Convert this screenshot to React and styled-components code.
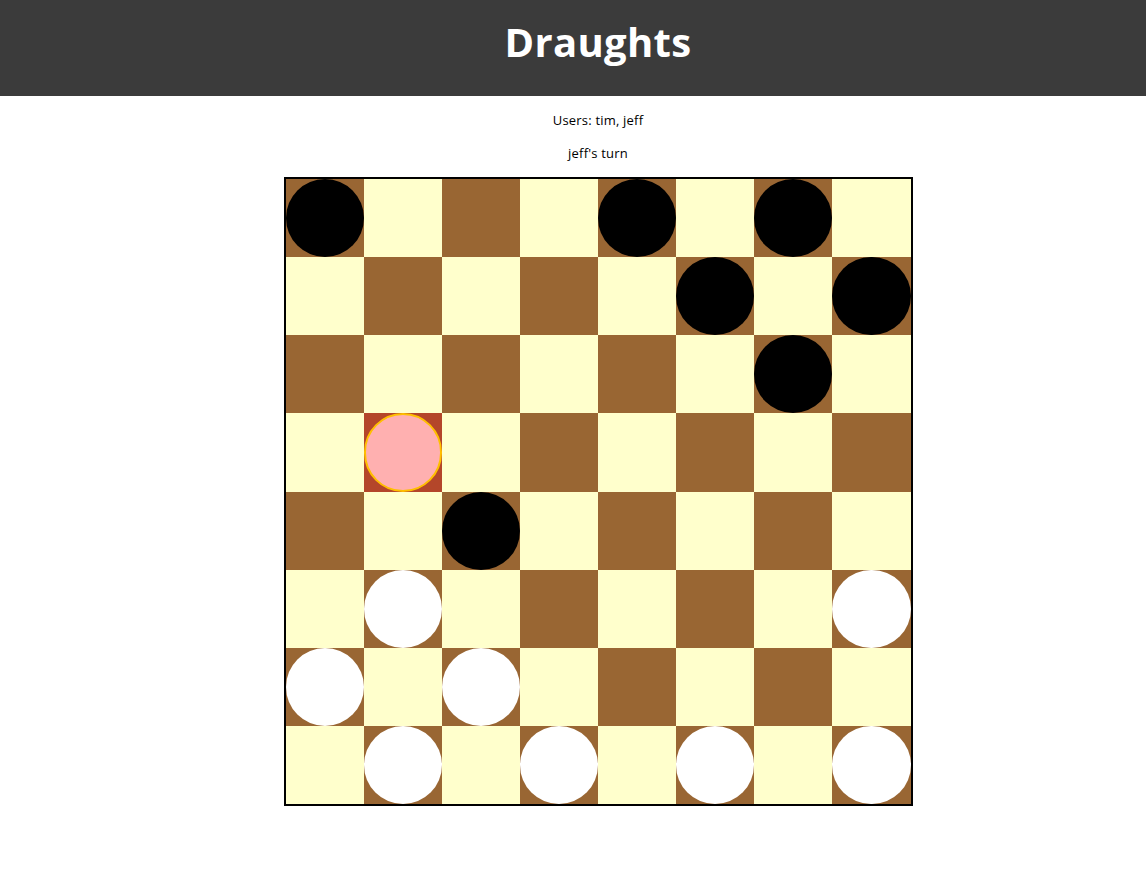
import React from 'react';
import styled, { createGlobalStyle } from 'styled-components';

const GlobalStyle = createGlobalStyle`
    body {
        margin: 0;
        background: white;
        font-family: "Open Sans", "Noto Sans", sans-serif;
    }
`;

const Header = styled.header`
    box-sizing: border-box;
    height: 96px;
    background-color: #3b3b3b;
    display: flex;
    align-items: center;
    justify-content: center;
    padding-left: 50px;
    padding-bottom: 14px;
`;

const Title = styled.h1`
    margin: 0;
    color: white;
    font-size: 40px;
    font-weight: 700;
    letter-spacing: 0.3px;
`;

const Main = styled.main`
    display: flex;
    flex-direction: column;
    align-items: center;
    padding-left: 50px;
    padding-top: 15px;
`;

const Info = styled.p`
    margin: 0 0 15px;
    font-size: 13px;
    line-height: 18px;
    color: black;
    letter-spacing: 0.2px;
`;

const Board = styled.div`
    box-sizing: border-box;
    width: 629px;
    height: 629px;
    display: grid;
    grid-template-columns: repeat(8, 1fr);
    grid-template-rows: repeat(8, 1fr);
    border: 2px solid black;
`;

const Square = styled.div`
    display: flex;
    align-items: center;
    justify-content: center;
    background-color: ${props => props.selected ? '#b4462a' : props.dark ? '#996633' : '#ffffcc'};
`;

const Piece = styled.div`
    box-sizing: border-box;
    width: 100%;
    height: 100%;
    border-radius: 50%;
    background-color: ${props => props.selected ? '#ffb0b0' : props.colour === 'b' ? 'black' : 'white'};
    border: ${props => props.selected ? '2px solid #ffbf00' : 'none'};
`;

const layout = [
    'b...b.b.',
    '.....b.b',
    '......b.',
    '.p......',
    '..b.....',
    '.w.....w',
    'w.w.....',
    '.w.w.w.w',
];

export default function App() {
    return (
        <>
            <GlobalStyle />
            <Header>
                <Title>Draughts</Title>
            </Header>
            <Main>
                <Info>Users: tim, jeff</Info>
                <Info>jeff's turn</Info>
                <Board>
                    {layout.map((row, r) =>
                        row.split('').map((cell, c) => {
                            const selected = cell === 'p';
                            return (
                                <Square key={r + '-' + c} dark={(r + c) % 2 === 0} selected={selected}>
                                    {cell !== '.' && <Piece colour={cell} selected={selected} />}
                                </Square>
                            );
                        })
                    )}
                </Board>
            </Main>
        </>
    );
}
